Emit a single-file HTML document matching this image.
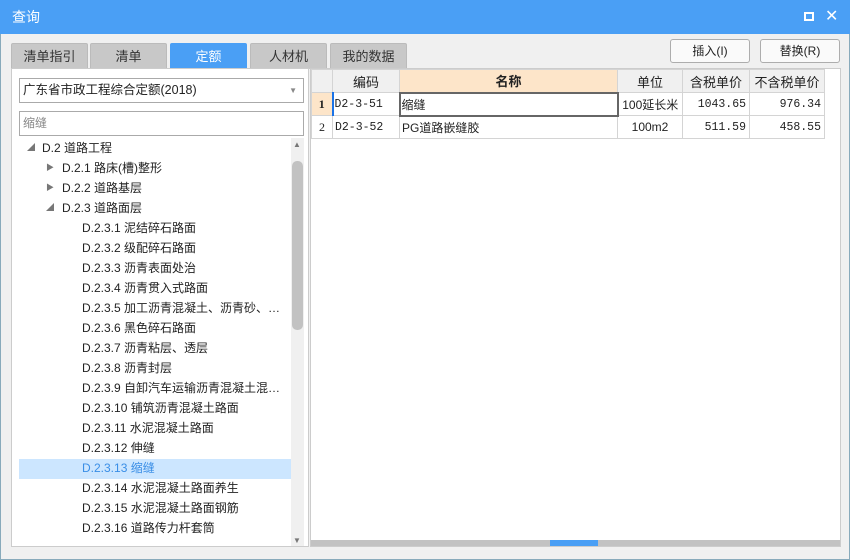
<!DOCTYPE html>
<html><head><meta charset="utf-8"><style>
*{margin:0;padding:0;box-sizing:border-box}
body{width:850px;height:560px;background:#f0f0f0;font-family:"Liberation Sans","Noto Sans CJK SC",sans-serif;font-size:12px;color:#222;position:relative;overflow:hidden;}
.abs{position:absolute}
.title{left:0;top:0;width:850px;height:34px;background:#4a9ff5;color:#fff;font-size:14px;line-height:34px;padding-left:12px}
.tab{top:43px;height:26px;width:77px;background:#c8c8c8;border:1px solid #bbb;border-bottom:none;text-align:center;line-height:26px;font-size:13px;color:#333;border-radius:2px 2px 0 0}
.btn{top:39px;height:24px;width:80px;border:1px solid #adadad;background:#fafafa;border-radius:3px;text-align:center;line-height:22px;font-size:12px}
.tree div{position:absolute;height:20px;line-height:20px;font-size:12px;white-space:nowrap}
table{border-collapse:collapse;position:absolute;left:311px;top:69px;font-size:12px}
td{border:1px solid #d4d4d4;height:23px;padding:0 3px;white-space:nowrap}
th{border:1px solid #d4d4d4;height:23px;background:#f0f0f0;font-weight:normal;font-size:13px}
.mono{font-family:"Liberation Mono","Noto Serif CJK SC",monospace;font-size:11.5px}
</style></head><body>
<div class="abs" style="left:0;top:0;width:850px;height:560px;border:1px solid #8ab"></div>
<div class="abs title">查询</div>
<div class="abs" style="left:804px;top:12px;width:10px;height:9px;border:2px solid #fff"></div>
<div class="abs" style="left:825px;top:6px;color:#fff;font-size:16px;line-height:22px">✕</div>
<div class="abs tab" style="left:11px">清单指引</div>
<div class="abs tab" style="left:90px">清单</div>
<div class="abs tab" style="left:170px;background:#4a9ff5;border-color:#4a9ff5;color:#fff">定额</div>
<div class="abs tab" style="left:250px">人材机</div>
<div class="abs tab" style="left:330px">我的数据</div>
<div class="abs btn" style="left:670px">插入(I)</div>
<div class="abs btn" style="left:760px">替换(R)</div>
<div class="abs" style="left:11px;top:68px;width:298px;height:479px;background:#fff;border:1px solid #ccc"></div>
<div class="abs" style="left:19px;top:78px;width:285px;height:25px;border:1px solid #aaa;background:#fff;line-height:23px;padding-left:3px;font-size:12.5px">广东省市政工程综合定额(2018)<span style="position:absolute;right:6px;top:0;color:#888;font-size:8px">▼</span></div>
<div class="abs" style="left:19px;top:111px;width:285px;height:25px;border:1px solid #aaa;background:#fff;line-height:23px;padding-left:3px;color:#888">缩缝</div>
<div class="abs" style="left:19px;top:459px;width:272px;height:20px;background:#cce6ff"></div>
<div class="abs" style="left:291px;top:138px;width:13px;height:408px;background:#f0f0f0"></div>
<div class="abs" style="left:292px;top:161px;width:11px;height:169px;background:#c2c2c2;border-radius:5px"></div>
<div class="abs" style="left:293px;top:140px;font-size:8px;color:#777">▲</div>
<div class="abs" style="left:293px;top:536px;font-size:8px;color:#777">▼</div>
<div class="tree">
<div style="left:27px;top:138px;color:#777;font-size:8px">◢</div><div style="left:42px;top:138px">D.2 道路工程</div>
<div style="left:46px;top:158px;color:#777;font-size:8px">▶</div><div style="left:62px;top:158px">D.2.1 路床(槽)整形</div>
<div style="left:46px;top:178px;color:#777;font-size:8px">▶</div><div style="left:62px;top:178px">D.2.2 道路基层</div>
<div style="left:46px;top:198px;color:#777;font-size:8px">◢</div><div style="left:62px;top:198px">D.2.3 道路面层</div>
<div style="left:82px;top:218px">D.2.3.1 泥结碎石路面</div>
<div style="left:82px;top:238px">D.2.3.2 级配碎石路面</div>
<div style="left:82px;top:258px">D.2.3.3 沥青表面处治</div>
<div style="left:82px;top:278px">D.2.3.4 沥青贯入式路面</div>
<div style="left:82px;top:298px">D.2.3.5 加工沥青混凝土、沥青砂、…</div>
<div style="left:82px;top:318px">D.2.3.6 黑色碎石路面</div>
<div style="left:82px;top:338px">D.2.3.7 沥青粘层、透层</div>
<div style="left:82px;top:358px">D.2.3.8 沥青封层</div>
<div style="left:82px;top:378px">D.2.3.9 自卸汽车运输沥青混凝土混…</div>
<div style="left:82px;top:398px">D.2.3.10 铺筑沥青混凝土路面</div>
<div style="left:82px;top:418px">D.2.3.11 水泥混凝土路面</div>
<div style="left:82px;top:438px">D.2.3.12 伸缝</div>
<div style="left:82px;top:458px;color:#3a8ee6">D.2.3.13 缩缝</div>
<div style="left:82px;top:478px">D.2.3.14 水泥混凝土路面养生</div>
<div style="left:82px;top:498px">D.2.3.15 水泥混凝土路面钢筋</div>
<div style="left:82px;top:518px">D.2.3.16 道路传力杆套筒</div>
</div>
<div class="abs" style="left:12px;top:538px;width:279px;height:8px;background:#fff"></div>
<div class="abs" style="left:310px;top:68px;width:531px;height:479px;background:#fff;border:1px solid #ccc"></div>
<table>
<tr><th style="width:21px"></th><th style="width:67px">编码</th><th style="width:218px;background:#fde5c9;font-weight:bold">名称</th><th style="width:65px">单位</th><th style="width:67px">含税单价</th><th style="width:75px">不含税单价</th></tr>
<tr><td style="background:#fde5c9;font-weight:bold;text-align:center;font-family:'Liberation Serif',serif">1</td><td class="mono" style="border-left:2px solid #1a73e8;padding-left:1px">D2-3-51</td><td style="border:2px solid #666;padding-left:1px">缩缝</td><td style="text-align:center">100延长米</td><td class="mono" style="text-align:right">1043.65</td><td class="mono" style="text-align:right">976.34</td></tr>
<tr><td style="text-align:center;font-family:'Liberation Serif',serif">2</td><td class="mono" style="padding-left:2px">D2-3-52</td><td style="padding-left:2px">PG道路嵌缝胶</td><td style="text-align:center">100m2</td><td class="mono" style="text-align:right">511.59</td><td class="mono" style="text-align:right">458.55</td></tr>
</table>
<div class="abs" style="left:311px;top:540px;width:529px;height:6px;background:#c2c2c2"></div>
<div class="abs" style="left:550px;top:540px;width:48px;height:6px;background:#4a9ff5"></div>
</body></html>
